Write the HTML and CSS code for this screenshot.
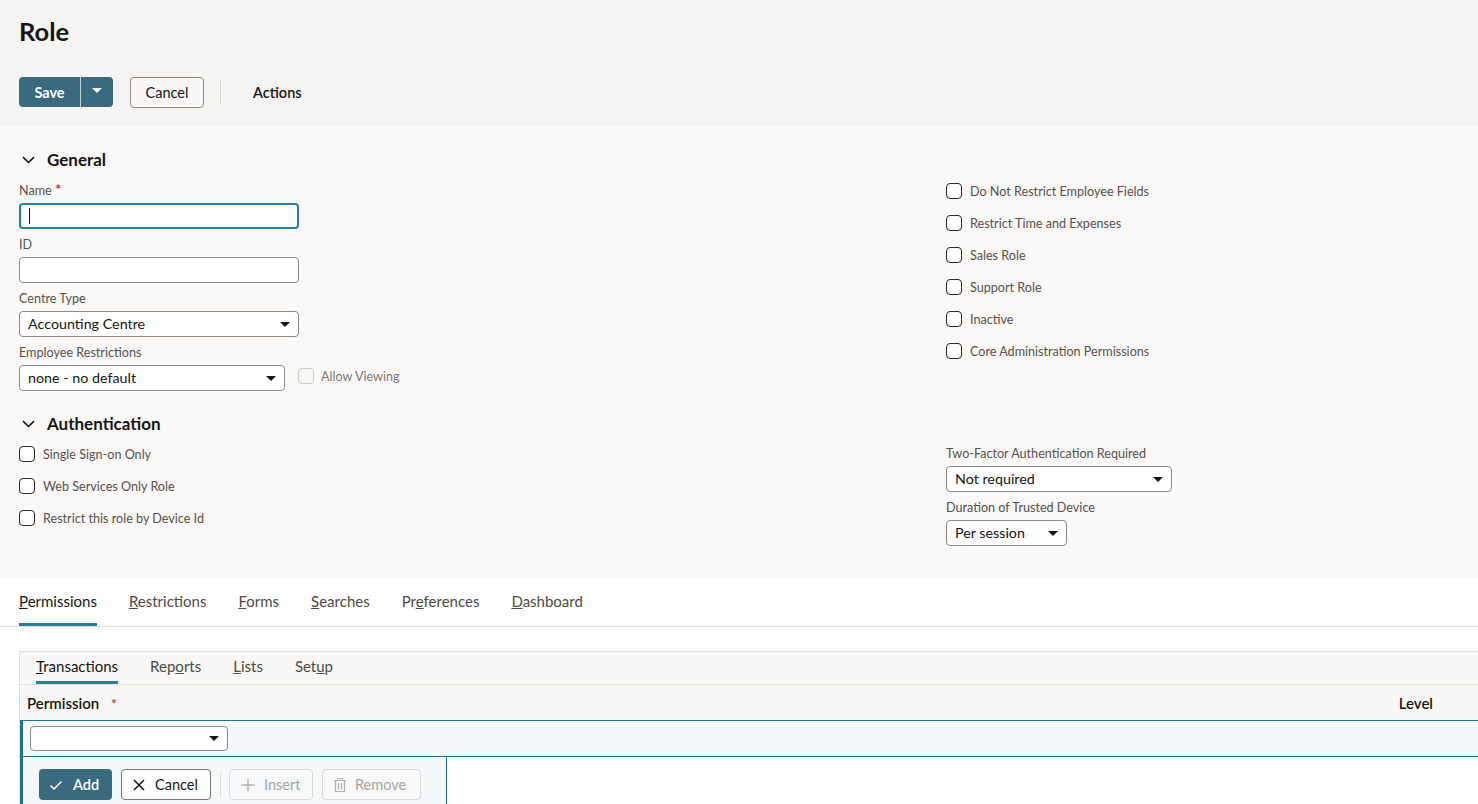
FILE: index.html
```html
<!DOCTYPE html>
<html lang="en">
<head>
<meta charset="utf-8">
<title>Role</title>
<link rel="stylesheet" href="styles.css">
</head>
<body>
<header class="page-header">
  <h1 class="title">Role</h1>
  <div class="toolbar">
    <div class="split">
      <button class="btn-primary save">Save</button>
      <button class="btn-primary split-caret"><svg width="10" height="6" viewBox="0 0 10 6"><path d="M0 0H10L5 5Z" fill="#fff"/></svg></button>
    </div>
    <button class="btn-outline">Cancel</button>
    <span class="vsep"></span>
    <button class="btn-text">Actions</button>
  </div>
</header>

<main class="form-area">
  <section class="sec">
    <h2 class="sec-title"><svg class="chev" width="13" height="8" viewBox="0 0 13 8"><path d="M1 1.2L6.5 6.5L12 1.2" fill="none" stroke="#161513" stroke-width="1.6"/></svg>General</h2>
    <div class="cols">
      <div class="fields">
        <div class="field">
          <label class="lbl">Name <span class="req">*</span></label>
          <div class="input focused"><span class="text-caret"></span></div>
        </div>
        <div class="field">
          <label class="lbl">ID</label>
          <div class="input"></div>
        </div>
        <div class="field">
          <label class="lbl">Centre Type</label>
          <div class="input select w-full"><span>Accounting Centre</span><i class="tri"></i></div>
        </div>
        <div class="field">
          <label class="lbl">Employee Restrictions</label>
          <div class="inline">
            <div class="input select w-emp"><span>none - no default</span><i class="tri"></i></div>
            <label class="check disabled"><span class="box"></span>Allow Viewing</label>
          </div>
        </div>
      </div>
      <div class="checks top-general">
        <label class="check"><span class="box"></span>Do Not Restrict Employee Fields</label>
        <label class="check"><span class="box"></span>Restrict Time and Expenses</label>
        <label class="check"><span class="box"></span>Sales Role</label>
        <label class="check"><span class="box"></span>Support Role</label>
        <label class="check"><span class="box"></span>Inactive</label>
        <label class="check"><span class="box"></span>Core Administration Permissions</label>
      </div>
    </div>
  </section>

  <section class="sec auth">
    <h2 class="sec-title"><svg class="chev" width="13" height="8" viewBox="0 0 13 8"><path d="M1 1.2L6.5 6.5L12 1.2" fill="none" stroke="#161513" stroke-width="1.6"/></svg>Authentication</h2>
    <div class="cols">
      <div class="checks top-auth">
        <label class="check"><span class="box"></span>Single Sign-on Only</label>
        <label class="check"><span class="box"></span>Web Services Only Role</label>
        <label class="check"><span class="box"></span>Restrict this role by Device Id</label>
      </div>
      <div class="fields top-auth-right">
        <div class="field">
          <label class="lbl">Two-Factor Authentication Required</label>
          <div class="input select w-2fa"><span>Not required</span><i class="tri"></i></div>
        </div>
        <div class="field">
          <label class="lbl">Duration of Trusted Device</label>
          <div class="input select w-dur"><span>Per session</span><i class="tri"></i></div>
        </div>
      </div>
    </div>
  </section>
</main>

<nav class="tabs">
  <a class="tab active"><u>P</u>ermissions</a>
  <a class="tab"><u>R</u>estrictions</a>
  <a class="tab"><u>F</u>orms</a>
  <a class="tab"><u>S</u>earches</a>
  <a class="tab">Pr<u>e</u>ferences</a>
  <a class="tab"><u>D</u>ashboard</a>
</nav>

<div class="subpanel">
  <div class="subtabs">
    <a class="subtab active"><u>T</u>ransactions</a>
    <a class="subtab">Rep<u>o</u>rts</a>
    <a class="subtab"><u>L</u>ists</a>
    <a class="subtab">Set<u>u</u>p</a>
  </div>
  <div class="thead">
    <span class="th-perm">Permission <span class="req">*</span></span>
    <span class="th-level">Level</span>
  </div>
  <div class="edit-row">
    <div class="input select w-perm"><span></span><i class="tri"></i></div>
  </div>
  <div class="edit-actions">
    <button class="abtn add"><svg width="16" height="16" viewBox="0 0 16 16"><path d="M2.5 8.5L6 12L13.5 4.5" fill="none" stroke="#fff" stroke-width="1.5"/></svg>Add</button>
    <button class="abtn outline"><svg width="14" height="14" viewBox="0 0 14 14"><path d="M2 2L12 12M12 2L2 12" fill="none" stroke="#161513" stroke-width="1.5"/></svg>Cancel</button>
    <span class="vsep small"></span>
    <button class="abtn disabled insert"><svg width="16" height="16" viewBox="0 0 16 16"><path d="M8 1.5V14.5M1.5 8H14.5" fill="none" stroke="#b3afaa" stroke-width="1.4"/></svg>Insert</button>
    <button class="abtn disabled remove"><svg width="14" height="16" viewBox="0 0 14 16"><path d="M4.5 1.5H9.5V3.5M1 3.5H13M2.5 3.5V14.5H11.5V3.5M5.5 6V12.5M8.5 6V12.5" fill="none" stroke="#b3afaa" stroke-width="1.2"/></svg>Remove</button>
  </div>
</div>
</body>
</html>
```

FILE: styles.css
```css
* { box-sizing: border-box; }
html, body { margin: 0; padding: 0; }
body {
  font-family: Lato, "Liberation Sans", Arial, sans-serif;
  color: #161513;
  background: #fff;
  width: 1478px;
  height: 804px;
  overflow: hidden;
}
button { font-family: inherit; cursor: pointer; }

/* header */
.page-header {
  background: #f5f4f2;
  height: 126px;
  padding: 16px 19px 0;
}
.title {
  margin: 0;
  font-size: 25.5px;
  line-height: 30px;
  font-weight: 700;
}
.toolbar {
  display: flex;
  align-items: center;
  margin-top: 31px;
  height: 30px;
}
.split { display: flex; height: 30px; }
.btn-primary {
  background: #3a6a7f;
  color: #fff;
  border: none;
  height: 30px;
  font-size: 14.5px;
  font-weight: 700;
}
.save { width: 61px; border-radius: 4px 0 0 4px; }
.split-caret {
  width: 33px;
  border-left: 1px solid #c6d3d9;
  border-radius: 0 4px 4px 0;
  display: flex;
  align-items: center;
  justify-content: center;
  padding: 0 0 2px;
}
.btn-outline {
  margin-left: 17px;
  width: 74px;
  height: 31px;
  border: 1px solid #8d8883;
  border-radius: 4px;
  background: #f9f8f6;
  color: #161513;
  font-size: 14.5px;
}
.vsep {
  width: 1px;
  height: 24px;
  background: #dcd9d5;
  margin-left: 16px;
}
.btn-text {
  margin-left: 24px;
  border: none;
  background: none;
  padding: 0 8px;
  font-size: 14.5px;
  font-weight: 600;
  color: #161513;
}

/* form area */
.form-area {
  background: #faf9f7;
  height: 452px;
  padding: 23px 19px 0;
}
.sec-title {
  margin: 0;
  display: flex;
  align-items: center;
  font-size: 17px;
  line-height: 22px;
  font-weight: 700;
}
.chev { margin-left: 3px; margin-right: 12px; }
.cols {
  display: grid;
  grid-template-columns: 927px 1fr;
}
.fields { padding-top: 10px; }
.field { margin-bottom: 8px; }
.lbl {
  display: block;
  font-size: 12.6px;
  line-height: 16px;
  color: #55514d;
  margin-bottom: 4px;
}
.req { color: #c74634; font-size: 15px; font-weight: 700; }
.input {
  width: 280px;
  height: 26px;
  background: #fff;
  border: 1px solid #8e8984;
  border-radius: 4px;
  display: flex;
  align-items: center;
  padding: 0 8px 2px;
  font-size: 14.3px;
  color: #161513;
}
.input.focused {
  border: 2px solid #227fa0;
  padding: 0 8px;
}
.text-caret {
  width: 1px;
  height: 16px;
  background: #161513;
}
.select { justify-content: space-between; }
.tri {
  width: 0; height: 0;
  border-left: 5px solid transparent;
  border-right: 5px solid transparent;
  border-top: 5px solid #161513;
  margin-top: 2px;
}
.w-full { width: 280px; }
.w-emp { width: 266px; }
.w-2fa { width: 226px; }
.w-dur { width: 121px; }
.w-perm { width: 198px; height: 25px; }
.inline { display: flex; align-items: center; }
.inline .check { margin-left: 13px; height: 26px; padding-bottom: 4px; }

.checks { display: flex; flex-direction: column; }
.top-general { padding-top: 4px; }
.top-auth { padding-top: 3px; }
.top-auth-right { padding-top: 11px; }
.check {
  display: flex;
  align-items: center;
  height: 32px;
  font-size: 12.6px;
  color: #55514d;
}
.box {
  width: 16px;
  height: 16px;
  border: 1.5px solid #2a2724;
  border-radius: 4px;
  background: #fff;
  margin-right: 8px;
  flex: none;
}
.check.disabled { color: #7a7671; }
.check.disabled .box { border: 1px solid #cfcbc6; background: #faf9f7; margin-right: 7px; }

.auth { margin-top: 14px; }

/* tabs */
.tabs {
  display: flex;
  gap: 32px;
  padding: 0 19px;
  border-bottom: 1px solid #e2dfdb;
  height: 49px;
}
.tab {
  padding-top: 14px;
  line-height: 18px;
  font-size: 15px;
  color: #4e4a46;
  border-bottom: 3px solid transparent;
  height: 48px;
}
.tab.active { color: #161513; border-bottom-color: #2b7d9b; }

/* sub panel */
.subpanel {
  margin: 24px 0 0 19px;
  border-top: 1px solid #e4e1dd;
  border-left: 1px solid #e4e1dd;
}
.subtabs {
  display: flex;
  gap: 32px;
  padding-left: 16px;
  background: #f9f8f6;
  border-bottom: 1px solid #e2dfdb;
  height: 33px;
}
.subtab {
  padding-top: 5px;
  line-height: 18px;
  font-size: 15px;
  color: #4e4a46;
  border-bottom: 3px solid transparent;
  height: 32px;
}
.subtab.active { color: #161513; border-bottom-color: #2b7d9b; }
.thead {
  display: flex;
  align-items: center;
  height: 36px;
  background: #f9f8f6;
  border-bottom: 1px solid #1f7494;
  font-size: 15px;
  font-weight: 600;
  padding-left: 7px;
}
.th-perm .req { margin-left: 8px; font-size: 14px; }
.th-level { margin-left: auto; margin-right: 45px; }
.edit-row {
  height: 36px;
  background: #f4f9fc;
  border-left: 3px solid #1f7494;
  border-bottom: 1px solid #1f7494;
  display: flex;
  align-items: center;
  padding-left: 7px;
}
.edit-actions {
  width: 427px;
  height: 60px;
  background: #f4f9fc;
  border-left: 3px solid #1f7494;
  border-right: 1px solid #1f7494;
  display: flex;
  align-items: flex-start;
  padding: 12px 0 0 16px;
}
.abtn {
  height: 31px;
  border-radius: 4px;
  display: flex;
  align-items: center;
  gap: 8px;
  font-size: 14.5px;
  padding: 0 0 0 10px;
  background: #fff;
  flex: none;
}
.abtn.add {
  background: #3a6a7f;
  color: #fff;
  border: none;
  width: 73px;
  font-weight: 600;
  padding-left: 9px;
  gap: 9px;
}
.abtn.outline { margin-left: 9px; border: 1px solid #78736e; color: #161513; width: 90px; padding-left: 10px; gap: 9px; }
.abtn.disabled { border: 1px solid #dcd9d5; color: #a9a5a0; background: #f7f9fa; }
.abtn.insert { width: 84px; margin-left: 8px; }
.abtn.remove { width: 99px; margin-left: 9px; }
.vsep.small { margin: 4px 0 0 9px; height: 24px; }
```
